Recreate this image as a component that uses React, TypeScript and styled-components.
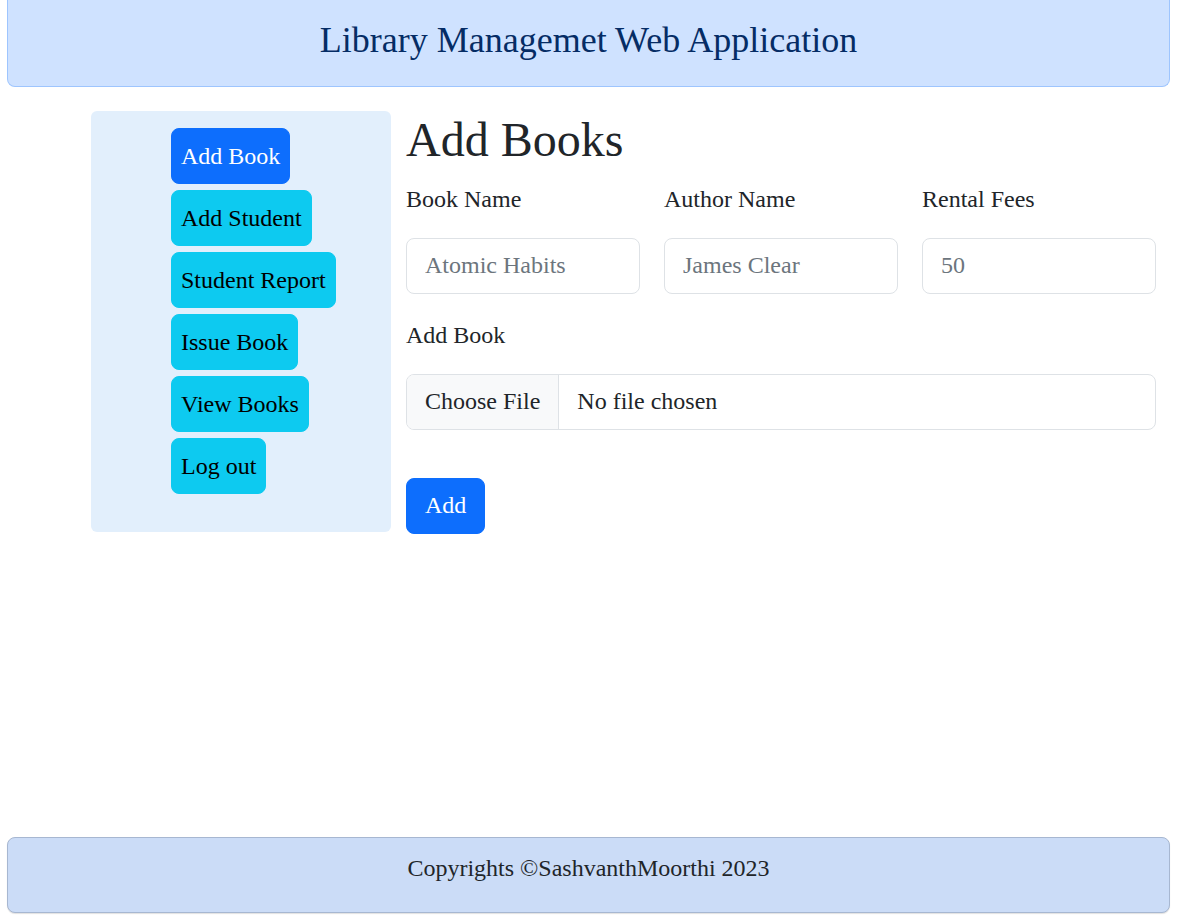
import { useState } from "react";
import styled, { createGlobalStyle } from "styled-components";

const GlobalStyle = createGlobalStyle`
  * {
    box-sizing: border-box;
  }

  body {
    margin: 0;
    font-family: "Liberation Serif", "Times New Roman", serif;
    color: #212529;
    background: #ffffff;
  }
`;

const menuItems = [
  "Add Book",
  "Add Student",
  "Student Report",
  "Issue Book",
  "View Books",
  "Log out",
];

const fields = [
  { label: "Book Name", placeholder: "Atomic Habits", name: "bookName" },
  { label: "Author Name", placeholder: "James Clear", name: "authorName" },
  { label: "Rental Fees", placeholder: "50", name: "rentalFees" },
];

export default function App() {
  const [active, setActive] = useState<string>("Add Book");
  const [fileName, setFileName] = useState<string>("");

  return (
    <>
      <GlobalStyle />
      <Page>
        <Header>
          <h1>Library Managemet Web Application</h1>
        </Header>

        <Main>
          <Sidebar>
            {menuItems.map((item) => (
              <MenuButton
                key={item}
                $active={item === active}
                onClick={() => setActive(item)}
              >
                {item}
              </MenuButton>
            ))}
          </Sidebar>

          <Content>
            <h2>Add Books</h2>
            <form onSubmit={(e) => e.preventDefault()}>
              <FieldRow>
                {fields.map((f) => (
                  <Field key={f.name}>
                    <Label htmlFor={f.name}>{f.label}</Label>
                    <TextInput id={f.name} name={f.name} placeholder={f.placeholder} />
                  </Field>
                ))}
              </FieldRow>

              <Label htmlFor="bookFile">Add Book</Label>
              <FilePicker>
                <input
                  id="bookFile"
                  type="file"
                  onChange={(e) => setFileName(e.target.files?.[0]?.name ?? "")}
                />
                <span className="choose">Choose File</span>
                <span className="chosen">{fileName || "No file chosen"}</span>
              </FilePicker>

              <SubmitButton type="submit">Add</SubmitButton>
            </form>
          </Content>
        </Main>

        <Footer>Copyrights ©SashvanthMoorthi 2023</Footer>
      </Page>
    </>
  );
}

const Page = styled.div`
  min-height: 100vh;
  display: flex;
  flex-direction: column;
  padding: 0 7px 11px 7px;
`;

const Header = styled.header`
  height: 87px;
  display: flex;
  align-items: center;
  justify-content: center;
  background: #cfe2ff;
  border: 1px solid #9ec5fe;
  border-top: 0;
  border-radius: 0 0 8px 8px;
  padding-bottom: 4px;

  h1 {
    margin: 0;
    font-size: 36px;
    font-weight: 400;
    line-height: 1.2;
    color: #052c65;
  }
`;

const Main = styled.main`
  flex: 1;
  display: flex;
  align-items: flex-start;
  gap: 15px;
  padding: 24px 0 0 84px;
`;

const Sidebar = styled.nav`
  width: 300px;
  flex-shrink: 0;
  display: flex;
  flex-direction: column;
  align-items: flex-start;
  gap: 6px;
  padding: 17px 0 38px 80px;
  background: #e2effc;
  border-radius: 6px;
`;

const MenuButton = styled.button<{ $active?: boolean }>`
  height: 56px;
  font-family: inherit;
  font-size: 24px;
  line-height: 1;
  padding: 0 9px;
  border: 1px solid ${(p) => (p.$active ? "#0d6efd" : "#0dcaf0")};
  border-radius: 8px;
  background: ${(p) => (p.$active ? "#0d6efd" : "#0dcaf0")};
  color: ${(p) => (p.$active ? "#ffffff" : "#000000")};
  cursor: pointer;
`;

const Content = styled.section`
  width: 750px;

  h2 {
    margin: 0 0 12px 0;
    font-size: 48px;
    font-weight: 400;
    line-height: 1.2;
  }
`;

const FieldRow = styled.div`
  display: grid;
  grid-template-columns: repeat(3, 1fr);
  gap: 24px;
  margin-bottom: 23px;
`;

const Field = styled.div`
  display: flex;
  flex-direction: column;
`;

const Label = styled.label`
  display: block;
  font-size: 24px;
  line-height: 1.5;
  margin-bottom: 21px;
`;

const TextInput = styled.input`
  width: 100%;
  height: 56px;
  padding: 0 18px;
  font-family: inherit;
  font-size: 24px;
  color: #212529;
  border: 1px solid #dee2e6;
  border-radius: 8px;
  outline: none;

  &::placeholder {
    color: #6c757d;
  }
`;

const FilePicker = styled.label`
  display: flex;
  align-items: stretch;
  height: 56px;
  border: 1px solid #dee2e6;
  border-radius: 8px;
  overflow: hidden;
  font-size: 24px;
  cursor: pointer;

  input {
    display: none;
  }

  .choose {
    display: flex;
    align-items: center;
    padding: 0 18px;
    background: #f8f9fa;
    border-right: 1px solid #dee2e6;
  }

  .chosen {
    display: flex;
    align-items: center;
    padding: 0 18px;
  }
`;

const SubmitButton = styled.button`
  display: block;
  margin-top: 48px;
  height: 56px;
  padding: 0 18px;
  font-family: inherit;
  font-size: 24px;
  color: #ffffff;
  background: #0d6efd;
  border: 1px solid #0d6efd;
  border-radius: 8px;
  cursor: pointer;
`;

const Footer = styled.footer`
  height: 76px;
  display: flex;
  align-items: center;
  justify-content: center;
  padding-bottom: 13px;
  font-size: 24px;
  color: #212529;
  background: #cbdcf7;
  border: 1px solid #a7b7d1;
  border-radius: 8px;
  box-shadow: 0 1px 1px rgba(0, 0, 0, 0.12);
`;
